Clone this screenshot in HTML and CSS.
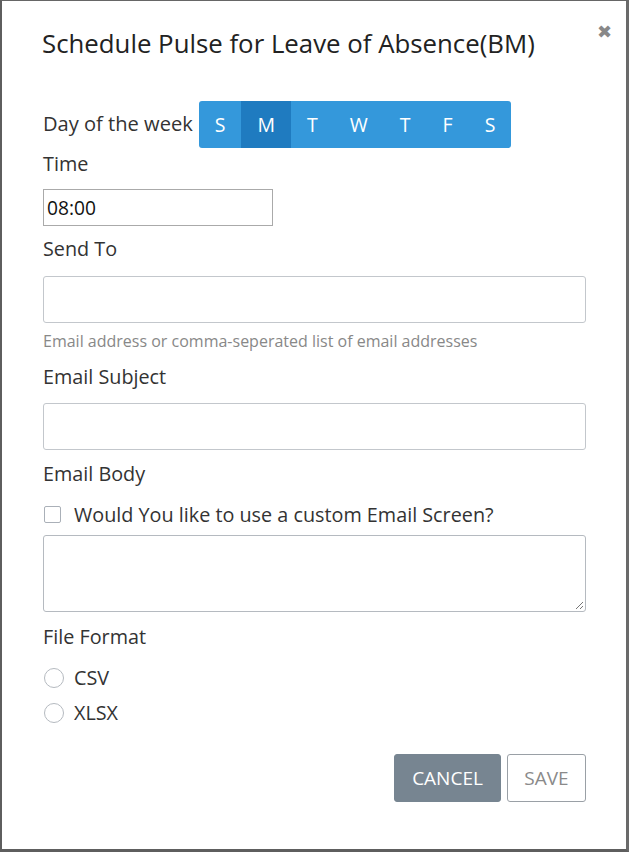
FILE: index.html
```html
<!DOCTYPE html>
<html>
<head>
<meta charset="utf-8">
<link rel="stylesheet" href="styles.css">
</head>
<body>
<div class="modal">
  <div class="header">
    <h1 class="title">Schedule Pulse for Leave of Absence(BM)</h1>
    <span class="close">&#x2716;</span>
  </div>
  <div class="body">
    <div class="day-row">
      <span class="label">Day of the week</span>
      <div class="days">
        <span class="day">S</span>
        <span class="day active">M</span>
        <span class="day">T</span>
        <span class="day">W</span>
        <span class="day">T</span>
        <span class="day">F</span>
        <span class="day">S</span>
      </div>
    </div>
    <div class="label time-label">Time</div>
    <div class="time-input">08:00</div>
    <div class="label send-label">Send To</div>
    <div class="input send-input"></div>
    <div class="help">Email address or comma-seperated list of email addresses</div>
    <div class="label subject-label">Email Subject</div>
    <div class="input subject-input"></div>
    <div class="label body-label">Email Body</div>
    <div class="check-row"><span class="checkbox"></span><span class="label">Would You like to use a custom Email Screen?</span></div>
    <div class="textarea">
      <svg class="grip" width="10" height="10" viewBox="0 0 10 10"><path d="M9 2 L2 9 M9 6 L6 9" stroke="#777" stroke-width="1"/></svg>
    </div>
    <div class="label format-label">File Format</div>
    <div class="radio-row csv"><span class="radio"></span><span class="label">CSV</span></div>
    <div class="radio-row xlsx"><span class="radio"></span><span class="label">XLSX</span></div>
    <div class="actions">
      <span class="btn cancel">CANCEL</span>
      <span class="btn save">SAVE</span>
    </div>
  </div>
</div>
</body>
</html>
```

FILE: styles.css
```css
* { box-sizing: border-box; }
html, body { margin: 0; padding: 0; background: #fff; }
body { font-family: "Open Sans", "Noto Sans", sans-serif; color: #333; width: 629px; height: 852px; overflow: hidden; }
.modal {
  width: 629px; height: 852px;
  border-top: 1px solid #666;
  border-left: 2px solid #5e5e5e;
  border-right: 3px solid #6a6a6a;
  border-bottom: 3px solid #5e5e5e;
  background: #fff;
  position: relative;
}
.header { padding: 26px 40px 0 40px; height: 57px; }
.title { margin: 0; font-size: 25.8px; font-weight: 400; line-height: 32px; color: #222; letter-spacing: 0; }
.close { position: absolute; right: 14px; top: 19px; font-size: 18px; color: #888; line-height: 22px; }
.body { padding: 0 40px 0 41px; display: flex; flex-direction: column; }
.label { font-size: 19.8px; line-height: 25px; color: #333; }
.day-row { display: flex; align-items: center; margin-top: 43px; height: 47px; }
.day-row .label { font-size: 20.1px; margin-top: -2px; }
.days { display: flex; margin-left: 6px; background: #3498db; border-radius: 3px; overflow: hidden; height: 47px; }
.day { color: #fff; font-size: 19.5px; line-height: 47px; padding: 0 16px; text-align: center; }
.day.active { background: #1f7bc0; }
.time-label { margin-top: 3px; }
.time-input {
  margin-top: 13px; width: 230px; height: 37px; border: 1px solid #aaa;
  font-size: 19.2px; line-height: 35px; padding-left: 3px; color: #111;
}
.send-label { margin-top: 10px; }
.input { width: 543px; height: 47px; border: 1px solid #c3c7cc; border-radius: 3px; }
.send-input { margin-top: 15px; }
.help { margin-top: 8px; font-size: 16px; line-height: 20px; color: #888; }
.subject-label { margin-top: 13px; }
.subject-input { margin-top: 14px; }
.body-label { margin-top: 11px; }
.check-row { display: flex; align-items: center; margin-top: 16px; }
.checkbox { width: 17px; height: 17px; border: 1px solid #aab0b8; border-radius: 2px; margin-left: 1px; margin-right: 13px; }
.textarea { margin-top: 8px; width: 543px; height: 77px; border: 1px solid #b5bac0; border-radius: 3px; position: relative; }
.grip { position: absolute; right: 1px; bottom: 1px; }
.format-label { margin-top: 12px; }
.radio-row { display: flex; align-items: center; }
.radio { width: 20px; height: 20px; border: 1px solid #b5bac0; border-radius: 50%; margin-left: 1px; margin-right: 10px; }
.csv { margin-top: 16px; }
.xlsx { margin-top: 10px; }
.actions { display: flex; justify-content: flex-end; gap: 6px; margin-top: 29px; }
.btn { height: 48px; line-height: 46px; font-size: 19px; border-radius: 3px; text-align: center; }
.cancel { width: 107px; background: #778591; color: #fff; border: 1px solid #778591; }
.save { width: 79px; background: #fff; color: #8a8a8a; border: 1px solid #9aa0a6; }
```
